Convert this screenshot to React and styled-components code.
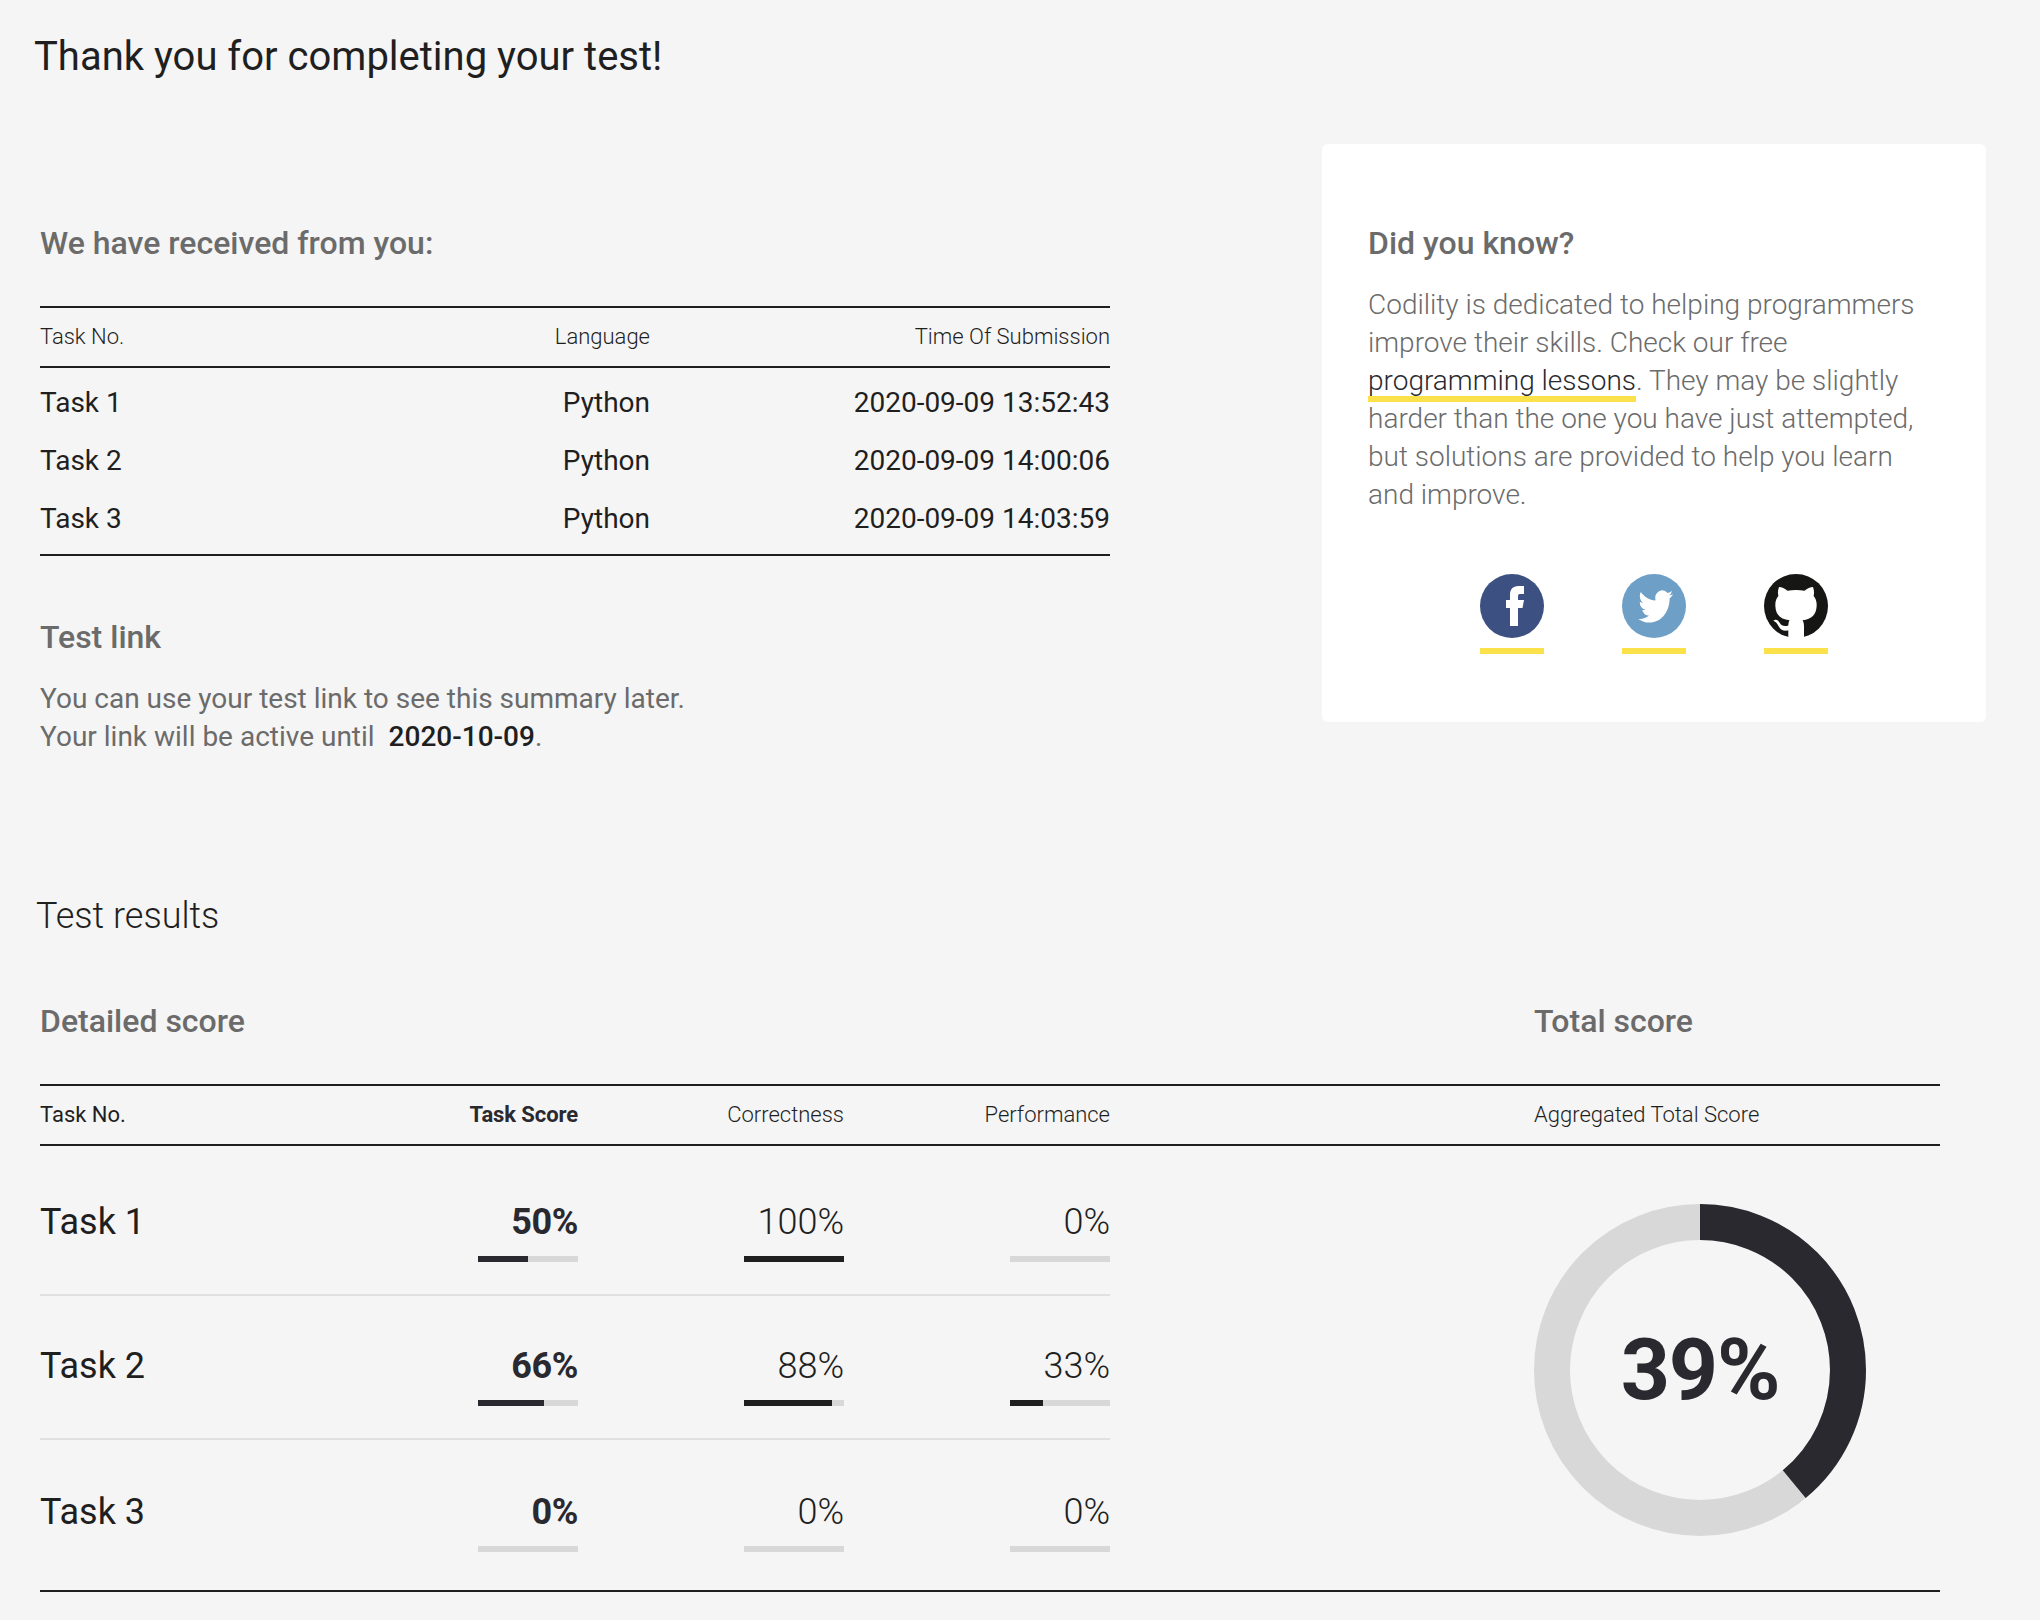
import React from "react";
import styled, { createGlobalStyle } from "styled-components";

const color = {
  page: "#f5f5f5",
  ink: "#1f1f1f",
  navy: "#29292f",
  gray: "#6b6b6b",
  track: "#d8d8d8",
  divider: "#e0e0e0",
  yellow: "#fce24a",
};

const GlobalStyle = createGlobalStyle`
  * { box-sizing: border-box; }
  body {
    margin: 0;
    background: ${color.page};
    color: ${color.ink};
    font-family: Roboto, "Liberation Sans", sans-serif;
    font-size: 28px;
  }
  h1, h2, h3, p { margin: 0; }
`;

const Page = styled.main`
  width: 2040px;
  height: 1620px;
  overflow: hidden;
  padding: 33px 54px 0 34px;
`;

const Title = styled.h1`
  font-size: 40px;
  line-height: 48px;
  font-weight: 400;
`;

const Overview = styled.section`
  display: flex;
  justify-content: space-between;
  align-items: flex-start;
  margin-top: 63px;
  padding-left: 6px;
`;

const Received = styled.div`
  width: 1070px;
  padding-top: 80px;
`;

const SectionTitle = styled.h3`
  font-size: 32px;
  line-height: 38px;
  font-weight: 500;
  color: ${color.gray};
`;

const SubmissionTable = styled.div`
  margin-top: 44px;
  border-top: 2px solid ${color.ink};
  border-bottom: 2px solid ${color.ink};
`;

const SubmissionHead = styled.div`
  display: grid;
  grid-template-columns: 305px 305px 460px;
  align-items: center;
  height: 60px;
  padding-bottom: 1px;
  border-bottom: 2px solid ${color.ink};
  font-size: 22px;
  font-weight: 300;
`;

const SubmissionBody = styled.div`
  padding: 6px 0;
`;

const SubmissionRow = styled.div`
  display: grid;
  grid-template-columns: 305px 305px 460px;
  line-height: 58px;
`;

const Cell = styled.span`
  text-align: ${(p) => (p.$end ? "right" : "left")};
  font-weight: ${(p) => p.$weight || "inherit"};
  color: ${(p) => p.$tone || "inherit"};
  letter-spacing: ${(p) => (p.$weight === 700 ? "-0.1px" : "normal")};
`;

const LinkInfo = styled.div`
  margin-top: 62px;
`;

const Copy = styled.p`
  margin-top: 24px;
  line-height: 38px;
  font-weight: ${(p) => p.$weight};
  color: ${color.gray};
`;

const Expiry = styled.strong`
  margin-left: 7px;
  font-weight: 500;
  color: ${color.ink};
`;

const Card = styled.aside`
  width: 664px;
  height: 578px;
  padding: 80px 46px 0;
  border-radius: 6px;
  background: #fff;
`;

const LessonLink = styled.a`
  color: ${color.navy};
  background: linear-gradient(${color.yellow}, ${color.yellow}) 0 100% / 100% 6px no-repeat;
  padding-bottom: 5px;
`;

const SocialLinks = styled.div`
  display: flex;
  justify-content: center;
  gap: 78px;
  margin-top: 60px;
`;

const SocialLink = styled.a`
  display: block;
  height: 80px;
  padding-bottom: 10px;
  border-bottom: 6px solid ${color.yellow};

  svg { display: block; }
`;

const Results = styled.section`
  margin-top: 139px;
  padding-left: 6px;
`;

const ResultsTitle = styled.h2`
  margin-left: -4px;
  font-size: 36px;
  line-height: 42px;
  font-weight: 300;
`;

const ResultsSplit = styled.div`
  display: grid;
  grid-template-columns: 1070px 406px;
  column-gap: 424px;
  width: 1900px;
`;

const ScoreTitles = styled(ResultsSplit)`
  margin: 65px 0 44px;
`;

const ScoreHead = styled(ResultsSplit)`
  height: 62px;
  padding-bottom: 1px;
  align-items: center;
  border-top: 2px solid ${color.ink};
  border-bottom: 2px solid ${color.ink};
  font-size: 22px;
  font-weight: 300;
`;

const ScoreBody = styled(ResultsSplit)`
  border-bottom: 2px solid ${color.ink};
`;

const ScoreColumns = styled.div`
  display: grid;
  grid-template-columns: 272px repeat(3, 266px);
`;

const ScoreRow = styled(ScoreColumns)`
  height: ${(p) => (p.$first || p.$last ? 150 : 144)}px;
  padding-top: ${(p) => (p.$first ? 55 : p.$last ? 51 : 49)}px;
  border-bottom: ${(p) => (p.$last ? "0" : `2px solid ${color.divider}`)};
  font-size: 36px;
  line-height: 42px;
`;

const Score = styled.div`
  display: flex;
  flex-direction: column;
  align-items: flex-end;
  font-weight: ${(p) => (p.$main ? 700 : 300)};
  letter-spacing: ${(p) => (p.$main ? "-0.4px" : "normal")};
  color: ${(p) => (p.$main ? color.navy : color.ink)};
`;

const Track = styled.div`
  width: 100px;
  height: 6px;
  margin-top: 13px;
  background: ${color.track};
`;

const Fill = styled.div`
  height: 6px;
  background: ${(p) => (p.$main ? color.navy : color.ink)};
`;

const Donut = styled.div`
  display: grid;
  width: 332px;
  height: 332px;
  margin-top: 58px;

  > * { grid-area: 1 / 1; }
`;

const DonutLabel = styled.div`
  align-self: center;
  text-align: center;
  font-size: 86px;
  line-height: 102px;
  font-weight: 700;
  letter-spacing: -1.2px;
  color: ${color.navy};
`;

const submissions = [
  ["Task 1", "Python", "2020-09-09 13:52:43"],
  ["Task 2", "Python", "2020-09-09 14:00:06"],
  ["Task 3", "Python", "2020-09-09 14:03:59"],
];

const scores = [
  ["Task 1", 50, 100, 0],
  ["Task 2", 66, 88, 33],
  ["Task 3", 0, 0, 0],
];

const FacebookIcon = () => (
  <svg width="64" height="64" viewBox="0 0 64 64">
    <circle cx="32" cy="32" r="32" fill="#3d5082" />
    <path
      fill="#fff"
      d="M44 12H38.5C32.5 12 30 15.5 30 21V26H26V34H30V52H38V34H42.5L44 26H38V22.5C38 20.6 38.8 20 40.5 20H44Z"
    />
  </svg>
);

const TwitterIcon = () => (
  <svg width="64" height="64" viewBox="0 0 64 64">
    <circle cx="32" cy="32" r="32" fill="#6e9fc7" />
    <path
      fill="#fff"
      transform="translate(16.4 12.7) scale(1.445 1.65)"
      d="M23.953 4.57a10 10 0 01-2.825.775 4.958 4.958 0 002.163-2.723c-.951.555-2.005.959-3.127 1.184a4.92 4.92 0 00-8.384 4.482C7.69 8.095 4.067 6.13 1.64 3.162a4.822 4.822 0 00-.666 2.475c0 1.71.87 3.213 2.188 4.096a4.904 4.904 0 01-2.228-.616v.06a4.923 4.923 0 003.946 4.827 4.996 4.996 0 01-2.212.085 4.936 4.936 0 004.604 3.417 9.867 9.867 0 01-6.102 2.105c-.39 0-.779-.023-1.17-.067a13.995 13.995 0 007.557 2.209c9.053 0 13.998-7.496 13.998-13.985 0-.21 0-.42-.015-.63A9.935 9.935 0 0024 4.59z"
    />
  </svg>
);

const GithubIcon = () => (
  <svg width="64" height="64" viewBox="0 0 64 64">
    <circle cx="32" cy="32" r="32" fill="#161614" />
    <path
      fill="#fff"
      d="M15 13C17.5 13 21 14.5 23.5 16.7C29 15.6 35 15.6 40.5 16.7C43 14.5 46.5 13 49 13C50.3 16.5 50.3 19.5 49.6 22C52 24.8 53 28 52.6 32.5C52.2 40.5 48 45 38.5 46.3C39.6 48 40 50 40 52.5V64H24.3V56.5C19.5 57 16.8 56.3 14.8 52.5C13.5 50 12 47.8 9.3 46.7C12.3 44.5 14.6 46.8 16 49.3C17.5 52 20.5 52.6 24.3 51.5C24.4 49.3 24.8 47.5 25.5 46.3C16 45 11.8 40.5 11.4 32.5C11 28 12 24.8 14.4 22C13.7 19.5 13.7 16.5 15 13Z"
    />
  </svg>
);

const RADIUS = 148;
const CIRCUMFERENCE = 2 * Math.PI * RADIUS;

function TotalScore({ value }) {
  return (
    <Donut>
      <svg width="332" height="332" viewBox="0 0 332 332" fill="none" strokeWidth="36">
        <circle cx="166" cy="166" r={RADIUS} stroke={color.track} />
        <circle
          cx="166"
          cy="166"
          r={RADIUS}
          stroke={color.navy}
          strokeDasharray={`${(CIRCUMFERENCE * value) / 100} ${CIRCUMFERENCE}`}
          transform="rotate(-90 166 166)"
        />
      </svg>
      <DonutLabel>{value}%</DonutLabel>
    </Donut>
  );
}

export default function App() {
  return (
    <>
      <GlobalStyle />
      <Page>
        <Title>Thank you for completing your test!</Title>
        <Overview>
          <Received>
            <SectionTitle>We have received from you:</SectionTitle>
            <SubmissionTable>
              <SubmissionHead>
                <Cell>Task No.</Cell>
                <Cell $end>Language</Cell>
                <Cell $end>Time Of Submission</Cell>
              </SubmissionHead>
              <SubmissionBody>
                {submissions.map(([task, language, time]) => (
                  <SubmissionRow key={task}>
                    <Cell>{task}</Cell>
                    <Cell $end>{language}</Cell>
                    <Cell $end>{time}</Cell>
                  </SubmissionRow>
                ))}
              </SubmissionBody>
            </SubmissionTable>
            <LinkInfo>
              <SectionTitle>Test link</SectionTitle>
              <Copy $weight={400}>
                You can use your test link to see this summary later.
                <br />
                Your link will be active until <Expiry>2020-10-09</Expiry>.
              </Copy>
            </LinkInfo>
          </Received>
          <Card>
            <SectionTitle>Did you know?</SectionTitle>
            <Copy $weight={300}>
              Codility is dedicated to helping programmers
              <br />
              improve their skills. Check our free
              <br />
              <LessonLink>programming lessons</LessonLink>. They may be slightly
              <br />
              harder than the one you have just attempted,
              <br />
              but solutions are provided to help you learn
              <br />
              and improve.
            </Copy>
            <SocialLinks>
              <SocialLink><FacebookIcon /></SocialLink>
              <SocialLink><TwitterIcon /></SocialLink>
              <SocialLink><GithubIcon /></SocialLink>
            </SocialLinks>
          </Card>
        </Overview>
        <Results>
          <ResultsTitle>Test results</ResultsTitle>
          <ScoreTitles>
            <SectionTitle>Detailed score</SectionTitle>
            <SectionTitle>Total score</SectionTitle>
          </ScoreTitles>
          <ScoreHead>
            <ScoreColumns>
              <Cell $weight={400}>Task No.</Cell>
              <Cell $end $weight={700} $tone={color.navy}>Task Score</Cell>
              <Cell $end>Correctness</Cell>
              <Cell $end>Performance</Cell>
            </ScoreColumns>
            <Cell>Aggregated Total Score</Cell>
          </ScoreHead>
          <ScoreBody>
            <div>
              {scores.map(([task, ...values], row) => (
                <ScoreRow key={task} $first={row === 0} $last={row === scores.length - 1}>
                  <Cell>{task}</Cell>
                  {values.map((value, i) => (
                    <Score key={i} $main={i === 0}>
                      {value}%
                      <Track>
                        <Fill $main={i === 0} style={{ width: `${value}%` }} />
                      </Track>
                    </Score>
                  ))}
                </ScoreRow>
              ))}
            </div>
            <TotalScore value={39} />
          </ScoreBody>
        </Results>
      </Page>
    </>
  );
}
